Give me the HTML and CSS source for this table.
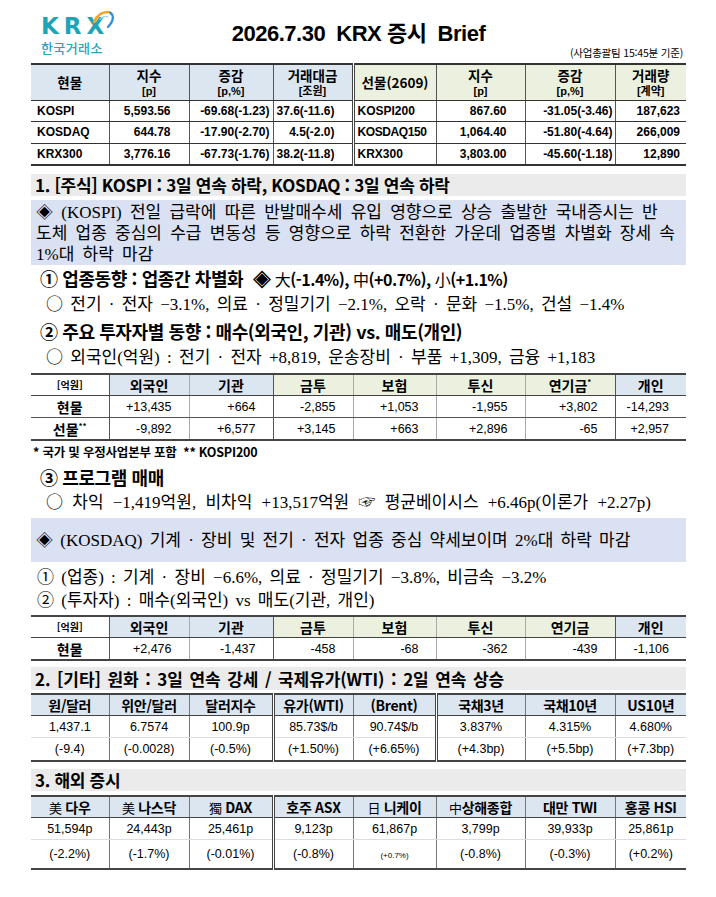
FILE: index.html
```html
<!DOCTYPE html>
<html lang="ko">
<head>
<meta charset="utf-8">
<title>KRX 증시 Brief</title>
<link rel="stylesheet" href="styles.css">
</head>
<body>
<div class="page">
  <header class="top">
    <div class="logo">
      <span class="krx">KRX</span>
      <svg class="swoosh" viewBox="0 0 24 22" aria-hidden="true">
        <path d="M2 12 C5 5 10 2 16 2" fill="none" stroke="#f4a31f" stroke-width="2.6" stroke-linecap="round"/>
        <path d="M18 2.5 C22 5 22 11 16 17" fill="none" stroke="#2f8fd4" stroke-width="2.3" stroke-linecap="round"/>
        <path d="M8 9 C11 6 14 6 16 7" fill="none" stroke="#9fd6ee" stroke-width="1.3" stroke-linecap="round"/>
      </svg>
      <span class="logo-ko">한국거래소</span>
    </div>
    <h1 class="title">2026.7.30&nbsp; KRX 증시&nbsp; Brief</h1>
    <div class="stamp">(사업총괄팀 15:45분 기준)</div>
  </header>

  <table class="tbl quote">
    <colgroup><col class="c1"><col class="c2"><col class="c3"><col class="c4"><col class="c5"><col class="c6"><col class="c7"><col class="c8"></colgroup>
    <thead>
      <tr>
        <th class="first">현물</th>
        <th>지수<span class="unit">[p]</span></th>
        <th>증감<span class="unit">[p,%]</span></th>
        <th>거래대금<span class="unit">[조원]</span></th>
        <th class="fut dbl">선물(2609)</th>
        <th class="fut">지수<span class="unit">[p]</span></th>
        <th class="fut">증감<span class="unit">[p,%]</span></th>
        <th class="fut">거래량<span class="unit">[계약]</span></th>
      </tr>
    </thead>
    <tbody>
      <tr>
        <td class="first name">KOSPI</td><td class="p18">5,593.56</td><td class="p3">-69.68(-1.23)</td><td class="p17">37.6(-11.6)</td>
        <td class="dbl name2">KOSPI200</td><td class="p18">867.60</td><td class="p2">-31.05(-3.46)</td><td class="p6">187,623</td>
      </tr>
      <tr>
        <td class="first name">KOSDAQ</td><td class="p18">644.78</td><td class="p3">-17.90(-2.70)</td><td class="p17">4.5(-2.0)</td>
        <td class="dbl name2 narrow">KOSDAQ150</td><td class="p18">1,064.40</td><td class="p2">-51.80(-4.64)</td><td class="p6">266,009</td>
      </tr>
      <tr>
        <td class="first name">KRX300</td><td class="p18">3,776.16</td><td class="p3">-67.73(-1.76)</td><td class="p17">38.2(-11.8)</td>
        <td class="dbl name2">KRX300</td><td class="p18">3,803.00</td><td class="p2">-45.60(-1.18)</td><td class="p6">12,890</td>
      </tr>
    </tbody>
  </table>

  <h2 class="sec sec1">1. [주식] KOSPI : 3일 연속 하락, KOSDAQ : 3일 연속 하락</h2>

  <div class="box box1">
    <p class="bl"><span class="sym">◈</span> (KOSPI) 전일 급락에 따른 반발매수세 유입 영향으로 상승 출발한 국내증시는 반</p>
    <p class="bl">도체 업종 중심의 수급 변동성 등 영향으로 하락 전환한 가운데 업종별 차별화 장세 속</p>
    <p class="bl">1%대 하락 마감</p>
  </div>

  <div class="points">
    <p class="head">① 업종동향 : 업종간 차별화 &nbsp;◈ <span class="mix"><span class="lt">大</span>(-1.4%), <span class="lt">中</span>(+0.7%), <span class="lt">小</span>(+1.1%)</span></p>
    <p class="note"><span class="sym">○</span> 전기 · 전자 −3.1%, 의료 · 정밀기기 −2.1%, 오락 · 문화 −1.5%, 건설 −1.4%</p>
    <p class="head">② 주요 투자자별 동향 : 매수(외국인, 기관) vs. 매도(개인)</p>
    <p class="note"><span class="sym">○</span> 외국인(억원) : 전기 · 전자 +8,819, 운송장비 · 부품 +1,309, 금융 +1,183</p>
  </div>

  <table class="tbl inv inv1">
    <colgroup><col class="c1"><col class="c2"><col class="c3"><col class="c4"><col class="c5"><col class="c6"><col class="c7"><col class="c8"></colgroup>
    <thead>
      <tr>
        <th class="first unitcell">[억원]</th>
        <th class="blue dk">외국인</th><th class="blue">기관</th>
        <th class="green dk">금투</th><th class="green">보험</th><th class="green">투신</th><th class="green">연기금<sup>*</sup></th>
        <th class="blue dk">개인</th>
      </tr>
    </thead>
    <tbody>
      <tr>
        <th class="first rowlab">현물</th>
        <td class="dk">+13,435</td><td>+664</td><td class="dk">-2,855</td><td>+1,053</td><td>-1,955</td><td>+3,802</td><td class="dk">-14,293</td>
      </tr>
      <tr>
        <th class="first rowlab">선물<sup>**</sup></th>
        <td class="dk">-9,892</td><td>+6,577</td><td class="dk">+3,145</td><td>+663</td><td>+2,896</td><td>-65</td><td class="dk">+2,957</td>
      </tr>
    </tbody>
  </table>
  <p class="foot">* 국가 및 우정사업본부 포함 &nbsp;** KOSPI200</p>

  <div class="points prog">
    <p class="head">③ 프로그램 매매</p>
    <p class="note"><span class="sym">○</span> 차익 −1,419억원, 비차익 +13,517억원 ☞ 평균베이시스 +6.46p(이론가 +2.27p)</p>
  </div>

  <div class="box box2"><p class="bl"><span class="sym">◈</span> (KOSDAQ) 기계 · 장비 및 전기 · 전자 업종 중심 약세보이며 2%대 하락 마감</p></div>

  <div class="points kq">
    <p class="note">① (업종) : 기계 · 장비 −6.6%, 의료 · 정밀기기 −3.8%, 비금속 −3.2%</p>
    <p class="note">② (투자자) : 매수(외국인) vs 매도(기관, 개인)</p>
  </div>

  <table class="tbl inv inv2">
    <colgroup><col class="c1"><col class="c2"><col class="c3"><col class="c4"><col class="c5"><col class="c6"><col class="c7"><col class="c8"></colgroup>
    <thead>
      <tr>
        <th class="first unitcell">[억원]</th>
        <th class="blue dk">외국인</th><th class="blue">기관</th>
        <th class="green dk">금투</th><th class="green">보험</th><th class="green">투신</th><th class="green">연기금</th>
        <th class="blue dk">개인</th>
      </tr>
    </thead>
    <tbody>
      <tr>
        <th class="first rowlab">현물</th>
        <td class="dk">+2,476</td><td>-1,437</td><td class="dk">-458</td><td>-68</td><td>-362</td><td>-439</td><td class="dk">-1,106</td>
      </tr>
    </tbody>
  </table>

  <h2 class="sec sec2">2. [기타] 원화 : 3일 연속 강세 / 국제유가(WTI) : 2일 연속 상승</h2>

  <table class="tbl mkt fx">
    <colgroup><col class="c1"><col class="c2"><col class="c3"><col class="c4"><col class="c5"><col class="c6"><col class="c7"><col class="c8"></colgroup>
    <thead>
      <tr>
        <th class="first">원/달러</th><th>위안/달러</th><th>달러지수</th>
        <th class="dbl">유가(WTI)</th><th>(Brent)</th>
        <th class="dbl">국채3년</th><th>국채10년</th><th>US10년</th>
      </tr>
    </thead>
    <tbody>
      <tr class="r1">
        <td class="first">1,437.1</td><td>6.7574</td><td>100.9p</td><td class="dbl">85.73$/b</td><td>90.74$/b</td><td class="dbl">3.837%</td><td>4.315%</td><td>4.680%</td>
      </tr>
      <tr class="r2">
        <td class="first">(-9.4)</td><td>(-0.0028)</td><td>(-0.5%)</td><td class="dbl">(+1.50%)</td><td>(+6.65%)</td><td class="dbl">(+4.3bp)</td><td>(+5.5bp)</td><td>(+7.3bp)</td>
      </tr>
    </tbody>
  </table>

  <h2 class="sec sec3">3. 해외 증시</h2>

  <table class="tbl mkt world">
    <colgroup><col class="c1"><col class="c2"><col class="c3"><col class="c4"><col class="c5"><col class="c6"><col class="c7"><col class="c8"></colgroup>
    <thead>
      <tr>
        <th class="first"><span class="cc">美</span> 다우</th><th><span class="cc">美</span> 나스닥</th><th><span class="cc">獨</span> DAX</th>
        <th class="dbl">호주 ASX</th><th><span class="cc">日</span> 니케이</th><th><span class="cc">中</span>상해종합</th><th>대만 TWI</th><th>홍콩 HSI</th>
      </tr>
    </thead>
    <tbody>
      <tr class="r1">
        <td class="first">51,594p</td><td>24,443p</td><td>25,461p</td><td class="dbl">9,123p</td><td>61,867p</td><td>3,799p</td><td>39,933p</td><td>25,861p</td>
      </tr>
      <tr class="r2 tall">
        <td class="first">(-2.2%)</td><td>(-1.7%)</td><td>(-0.01%)</td><td class="dbl">(-0.8%)</td><td><span class="tiny">(+0.7%)</span></td><td>(-0.8%)</td><td>(-0.3%)</td><td>(+0.2%)</td>
      </tr>
    </tbody>
  </table>
</div>
</body>
</html>
```

FILE: styles.css
```css
* { box-sizing: border-box; }
html, body { margin: 0; padding: 0; background: #fff; }
body { font-family: "Noto Sans CJK KR", sans-serif; color: #000; }

.page { width: 716px; padding: 0 30px 20px 31px; }

/* ---------- header ---------- */
.top {
  display: grid;
  grid-template-columns: 1fr auto 1fr;
  height: 63px;
}
.logo { position: relative; padding: 16px 0 0 10px; }
.krx {
  display: block;
  font: 700 23px/21px "DejaVu Sans", sans-serif;
  color: #1ea4b7;
  letter-spacing: 5px;
}
.logo-ko {
  display: block;
  font: 500 13px/15px "Noto Sans CJK KR", sans-serif;
  color: #27a6b9;
  margin-top: 3px;
  letter-spacing: 0.4px;
}
.swoosh { position: absolute; left: 61px; top: 10px; width: 24px; height: 22px; }

.title {
  margin: 20px 0 0;
  align-self: start;
  font: 700 22px/27px "Liberation Sans", "Noto Sans CJK KR", sans-serif;
  letter-spacing: -0.5px;
  white-space: nowrap;
}
.stamp {
  justify-self: end;
  align-self: end;
  font: 400 10.5px/14px "Noto Sans CJK KR", sans-serif;
  padding: 0 3px 3px 0;
  letter-spacing: -0.2px;
}

/* ---------- tables (shared) ---------- */
.tbl {
  width: 655px;
  border-collapse: collapse;
  table-layout: fixed;
  font-family: "Liberation Sans", "Noto Sans CJK KR", sans-serif;
}
.c1 { width: 78px; } .c2 { width: 80px; } .c3 { width: 84px; } .c4 { width: 80px; }
.c5 { width: 83px; } .c6 { width: 89px; } .c7 { width: 90px; } .c8 { width: 71px; }
.tbl th, .tbl td { padding: 0; white-space: nowrap; overflow: hidden; }
.tbl th { font-family: "Noto Sans CJK KR", sans-serif; font-weight: 700; }
.tbl .first { border-left: none; }
.tbl .dbl { border-left: 3px double #444; }

/* ---------- table 1 : quotes ---------- */
.quote thead th {
  height: 36px;
  background: #dce6f1;
  font-size: 13.5px;
  line-height: 19px;
  border-top: 2px solid #333;
  border-bottom: 1px solid #333;
  border-left: 1px solid #555;
  text-align: center;
}
.quote thead th.fut { background: #ebf1de; }
.quote thead th.dbl { border-left: 3px double #444; }
.quote .unit {
  display: block;
  font: 700 11px/13px "Liberation Sans", "Noto Sans CJK KR", sans-serif;
}
.quote td {
  height: 22px;
  font-size: 12px;
  font-weight: 700;
  text-align: right;
  border-left: 1px solid #555;
  border-bottom: 1px solid #333;
}
.quote tbody tr:first-child td { height: 21px; }
.quote tbody tr:last-child td { border-bottom: 2px solid #333; }
.quote td.dbl { border-left: 3px double #444; }
.quote .name { text-align: left; padding-left: 6px; }
.quote .name2 { text-align: left; padding-left: 3px; }
.quote .narrow { letter-spacing: -0.4px; }
.p18 { padding-right: 18px !important; }
.p17 { padding-right: 17px !important; }
.p6 { padding-right: 6px !important; }
.p3 { padding-right: 3px !important; }
.p2 { padding-right: 2px !important; }

/* ---------- section bars ---------- */
.sec {
  margin: 0;
  background: #ebebeb;
  font: 700 17px/22px "Noto Sans CJK KR", sans-serif;
  letter-spacing: -0.3px;
  padding-left: 4px;
  height: 22px;
  white-space: nowrap;
}
.sec1 { margin-top: 8px; }
.sec2 { margin-top: 6px; height: 23px; line-height: 23px; letter-spacing: -0.1px; word-spacing: 2px; }
.sec3 { margin-top: 7px; }

/* ---------- blue summary boxes ---------- */
.box {
  background: #dae1f2;
  font: 400 17px/21px "Liberation Serif", "Noto Sans CJK KR", serif;
  word-spacing: 4px;
  padding-left: 5px;
  white-space: nowrap;
}
.box .bl { margin: 0; height: 21px; }
.sym { font-family: "Noto Sans CJK KR", sans-serif; line-height: 1; }
.box1 { margin-top: 4px; height: 65px; padding-top: 2px; }
.box2 { margin-top: 3px; height: 44px; padding-top: 12px; word-spacing: 3px; }

/* ---------- bullet lines ---------- */
.points p { margin: 0; white-space: nowrap; height: 26.7px; }
.head {
  font: 700 18px/26.7px "Noto Sans CJK KR", sans-serif;
  padding-left: 9px;
  letter-spacing: -0.4px;
}
.head .mix { font-size: 16px; letter-spacing: -0.5px; line-height: 1; }
.head .lt { font-weight: 400; }
.note {
  font: 400 17px/26.7px "Liberation Serif", "Noto Sans CJK KR", serif;
  padding-left: 15px;
  word-spacing: 3px;
}
.inv1 { margin-top: 1px; }
.foot {
  margin: 0;
  height: 21px;
  font: 700 12.5px/21px "Noto Sans CJK KR", sans-serif;
  padding-left: 2px;
  letter-spacing: -0.2px;
}
.prog { margin-top: 3px; }
.points.prog p { height: 25px; line-height: 25px; }
.prog .note { word-spacing: 5px; }
.kq { margin-top: 4px; }
.points.kq p { height: 23px; line-height: 23px; padding-left: 6px; }

/* ---------- investor tables ---------- */
.inv2 { margin-top: 3px; }
.inv thead th {
  height: 22px;
  font-size: 14px;
  line-height: 16px;
  text-align: center;
  border-top: 2px solid #444;
  border-bottom: 1px solid #444;
  border-left: 1px solid #aaa;
}
.inv th.blue { background: #dce6f1; }
.inv th.green { background: #ebf1de; }
.inv th.unitcell { font-size: 10px; background: #fff; }
.inv sup { font-size: 8px; line-height: 0; vertical-align: 6px; }
.inv tbody th.rowlab { font-size: 14px; text-align: center; }
.inv tbody th, .inv tbody td {
  height: 22px;
  border-bottom: 1px solid #555;
}
.inv tbody tr:last-child th, .inv tbody tr:last-child td { border-bottom: 2px solid #444; }
.inv td {
  font-size: 12.5px;
  text-align: right;
  padding-right: 17px;
  border-left: 1px solid #aaa;
}
.inv .dk { border-left: 1px solid #555; }

/* ---------- market tables ---------- */
.fx { margin-top: 3px; }
.world { margin-top: 4px; }
.mkt thead th {
  height: 22px;
  background: #dce6f1;
  font-size: 14px;
  line-height: 16px;
  text-align: center;
  border-top: 2px solid #444;
  border-bottom: 1px solid #444;
  border-left: 1px solid #777;
  letter-spacing: -0.3px;
}
.mkt thead th.dbl { border-left: 3px double #444; }
.mkt td {
  height: 22px;
  font-size: 12.5px;
  text-align: center;
  border-left: 1px solid #777;
}
.mkt td.dbl { border-left: 3px double #444; }
.mkt .r1 td { border-bottom: 1px solid #ddd; }
.mkt .r2 td { height: 23px; border-bottom: 2px solid #444; }
.mkt .r2.tall td { height: 29px; }
.mkt .cc { font-weight: 400; font-size: 13px; }
.tiny { font-size: 8px; }
```
